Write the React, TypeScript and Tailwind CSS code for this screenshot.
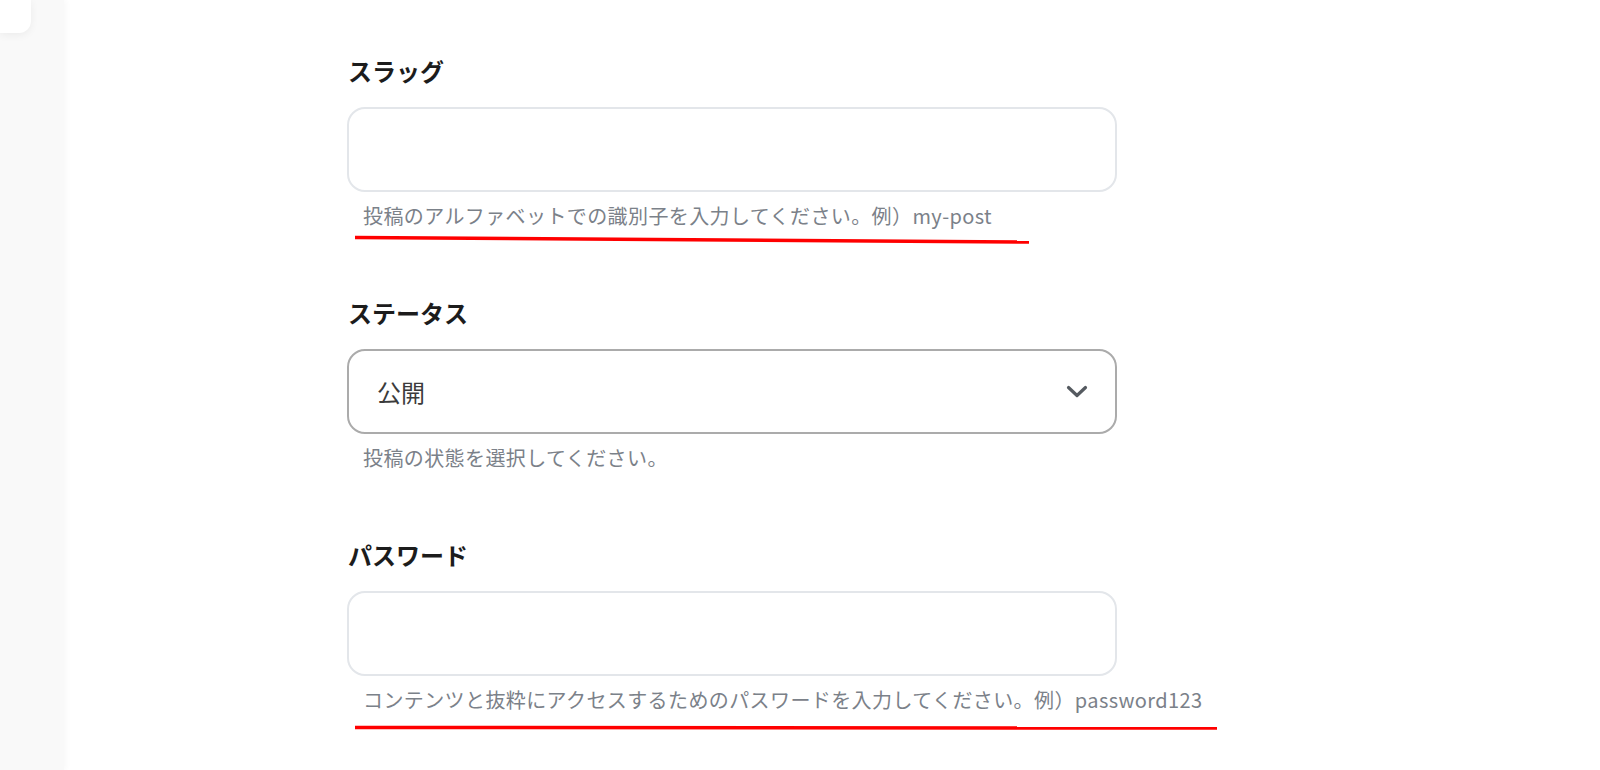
import React from "react";

const font = { fontFamily: '"Noto Sans CJK JP", "Noto Sans", sans-serif' };

function Chevron() {
    return (
        <svg width="22" height="14" viewBox="0 0 22 14" fill="none">
            <path d="M2.5 2.5 L11 10.5 L19.5 2.5" stroke="#555a60" strokeWidth="3.2" strokeLinecap="round" strokeLinejoin="round" />
        </svg>
    );
}

function Field({
    label,
    help,
    children,
    mark,
}: {
    label: string;
    help: string;
    children: React.ReactNode;
    mark?: React.ReactNode;
}) {
    return (
        <div className="flex flex-col">
            <div className="text-[24px] leading-[32px] font-bold text-[#1c1c1c] pl-px">{label}</div>
            <div className="mt-[20px]">{children}</div>
            <div className="relative mt-[10px] whitespace-nowrap pl-4 text-[20px] leading-[28px] tracking-[0.4px] text-[#7b8189]">
                {help}
                {mark}
            </div>
        </div>
    );
}

export default function App() {
    return (
        <div className="flex min-h-[770px] w-full bg-white" style={font}>
            <aside className="relative w-[64px] shrink-0 bg-[#f9f9f9] shadow-[2px_0_6px_rgba(0,0,0,0.03)]">
                <div className="h-[33px] w-[31px] rounded-br-[12px] bg-white shadow-[0_2px_8px_rgba(0,0,0,0.06)]" />
            </aside>

            <main className="flex-1 pl-[283px] pt-[55px]">
                <div className="flex w-[770px] flex-col gap-[67px]">
                    <Field
                        label="スラッグ"
                        help="投稿のアルファベットでの識別子を入力してください。例）my-post"
                        mark={
                            <svg className="absolute left-[8px] top-[33px]" width="680" height="10" viewBox="0 0 680 10">
                                <path d="M0 2.5 L674 7" stroke="#ff0000" strokeWidth="3.5" />
                            </svg>
                        }
                    >
                        <input
                            type="text"
                            className="h-[85px] w-full rounded-[18px] border-2 border-[#e3e6ea] bg-white px-6 outline-none"
                        />
                    </Field>

                    <Field label="ステータス" help="投稿の状態を選択してください。">
                        <div className="flex h-[85px] w-full items-center justify-between rounded-[18px] border-2 border-[#ababab] bg-white pl-[28px] pr-[27px]">
                            <span className="text-[24px] text-[#3b3b3b]">公開</span>
                            <Chevron />
                        </div>
                    </Field>

                    <Field
                        label="パスワード"
                        help="コンテンツと抜粋にアクセスするためのパスワードを入力してください。例）password123"
                        mark={
                            <svg className="absolute left-[8px] top-[39px]" width="870" height="6" viewBox="0 0 870 6">
                                <path d="M0 2.5 L862 3" stroke="#ff0000" strokeWidth="3.5" />
                            </svg>
                        }
                    >
                        <input
                            type="password"
                            className="h-[85px] w-full rounded-[18px] border-2 border-[#e3e6ea] bg-white px-6 outline-none"
                        />
                    </Field>
                </div>
            </main>
        </div>
    );
}
